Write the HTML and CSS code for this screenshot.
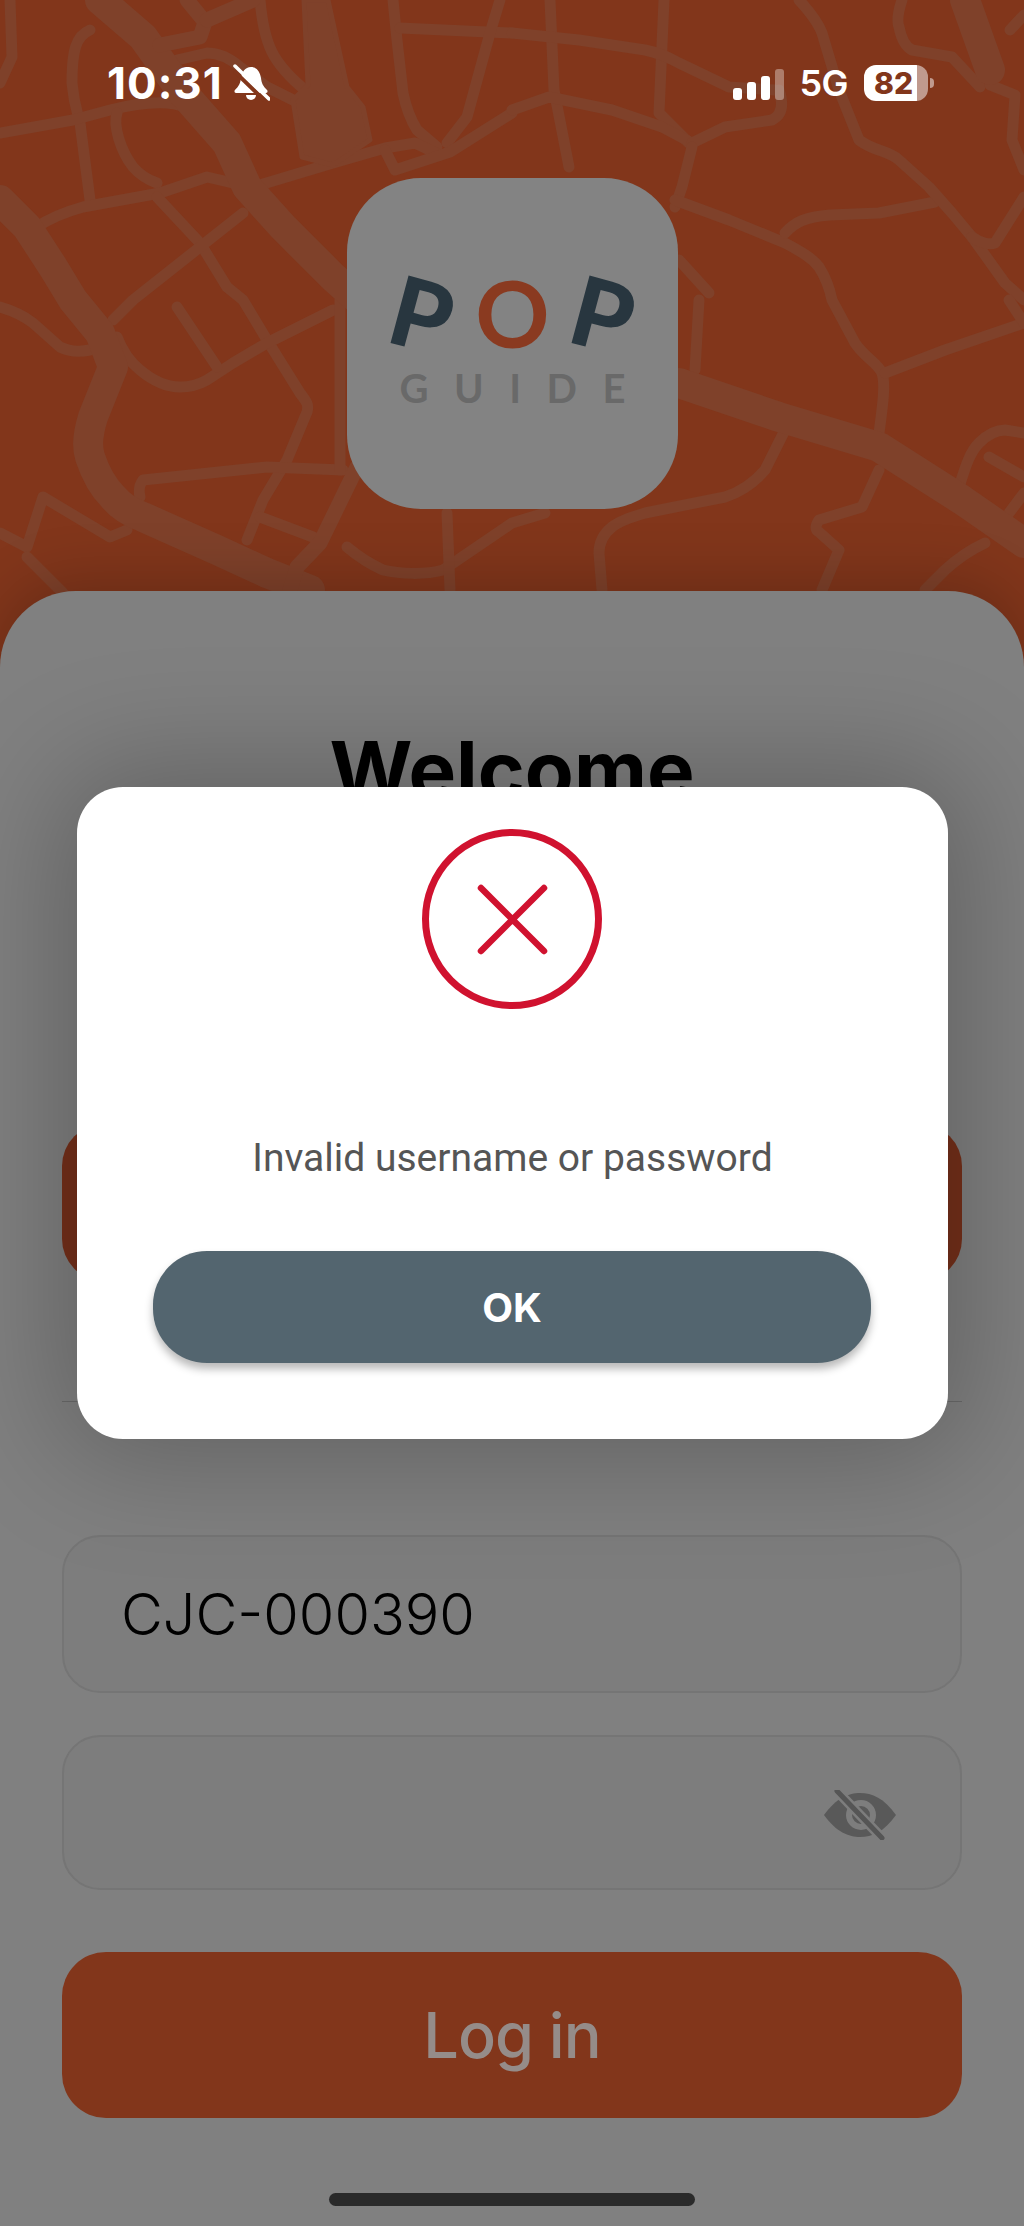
FILE: index.html
```html
<!DOCTYPE html>
<html lang="en">
<head>
<meta charset="utf-8">
<title>Pop Guide login</title>
<link rel="stylesheet" href="styles.css">
</head>
<body>
<div class="screen">
  <svg class="map" viewBox="0 0 1024 600" aria-hidden="true">
    <g class="roads thin">
      <path d="M10 0 12 57 0 83"/>
      <path d="M90 30C76 36 72 50 72 83 74 105 78 115 80 123L90 200"/>
      <path d="M0 133 73 120 110 110C130 105 150 102 167 103 180 104 190 108 200 113"/>
      <path d="M117 113C113 125 120 150 133 167 140 175 148 180 157 183"/>
      <path d="M37 227C50 218 65 212 83 207L160 193 207 177 250 187"/>
      <path d="M157 197 200 243 227 287 243 300 267 340 300 393C307 402 309 405 307 412L287 460 263 500 247 540"/>
      <path d="M113 320 133 300 200 247 243 213"/>
      <path d="M260 0C262 22 265 38 272 52 280 68 293 80 305 90"/>
      <path d="M177 60 207 53C220 53 232 60 240 67L267 87 293 100"/>
      <path d="M393 0 397 40 403 93C407 112 412 122 417 130L437 147"/>
      <path d="M400 28 512 33"/>
      <path d="M500 0 490 33 467 117 447 143"/>
      <path d="M253 187 333 163 385 148 415 143 440 155"/>
      <path d="M385 150 395 170 450 152 512 113"/>
      <path d="M550 0 554 90 569 167"/>
      <path d="M664 0 659 113 689 143"/>
      <path d="M512 33 579 40 645 50C660 53 670 58 679 63L729 87 775 90"/>
      <path d="M512 110 549 97 612 110 662 127 692 143"/>
      <path d="M692 143 725 127 772 120C782 115 784 105 779 90"/>
      <path d="M692 147 682 187 675 207"/>
      <path d="M675 200 729 220 785 243C802 252 812 258 819 267 826 278 830 290 832 300L855 343C865 358 877 362 882 373 886 385 882 410 879 433"/>
      <path d="M785 233C795 222 805 217 830 215L879 213 935 202"/>
      <path d="M799 0C810 12 818 22 822 33L839 90 859 140C875 152 888 150 899 160L929 187 952 213 972 237 1005 283 1024 300"/>
      <path d="M902 0C898 12 897 22 899 27 902 42 908 48 912 50L952 57 980 87"/>
      <path d="M990 85 1015 95 1012 140 1024 170"/>
      <path d="M1010 30 1024 15"/>
      <path d="M972 237C980 243 990 245 995 243L1024 197"/>
      <path d="M0 307C14 311 24 316 33 323L60 347C70 352 80 352 90 350"/>
      <path d="M117 337C122 350 130 362 140 370 152 380 165 387 180 387 192 387 200 384 207 380L233 363 267 343 333 310"/>
      <path d="M177 307 217 367"/>
      <path d="M140 497C138 488 140 484 143 480L267 467 343 470"/>
      <path d="M340 300V470"/>
      <path d="M260 517 313 537"/>
      <path d="M0 533 27 547 43 497 110 537 127 530"/>
      <path d="M27 557 63 593"/>
      <path d="M347 547C360 558 372 565 383 570 400 574 425 575 443 570L512 523 545 513"/>
      <path d="M447 513 450 590"/>
      <path d="M699 300 695 370"/>
      <path d="M679 260 709 293"/>
      <path d="M785 430 765 470C752 485 740 492 725 497L645 513C628 518 618 522 612 527 602 535 599 545 599 553L602 590"/>
      <path d="M885 373 945 350 1024 323"/>
      <path d="M1009 300 1024 323"/>
      <path d="M879 470 862 507 819 520C815 526 815 530 819 532L839 550 822 590"/>
      <path d="M959 487C966 465 970 452 979 443 988 434 996 430 1005 430L1024 433"/>
      <path d="M989 457 1024 477"/>
      <path d="M1024 493 1009 513"/>
      <path d="M985 543C970 550 958 558 945 570L925 590"/>
    </g>
    <g class="roads wide">
      <path d="M100 0 143 37 183 93 227 143 247 187 283 227 333 277 370 310"/>
      <path d="M0 200 27 227 53 267 73 300 100 333 113 367 93 417C86 440 88 450 90 457 96 475 104 488 113 497 122 508 132 513 143 517L217 550 267 573 310 590"/>
      <path d="M965 0 990 70"/>
      <path d="M679 383 779 417 879 447 962 500 1024 543"/>
    </g>
    <g class="roads mid">
      <path d="M160 45 200 37 205 22 187 0"/>
      <path d="M207 20 253 0"/>
      <path d="M357 467 320 543 297 567 290 590"/>
    </g>
    <path class="blob" d="M304 0H328L347 87 363 107 370 140 333 165 302 157 293 100 308 85Z"/>
  </svg>

  <header class="status">
    <div class="status-left">
      <span class="time">10:31</span>
      <svg class="bell" viewBox="0 0 37 38" aria-hidden="true">
        <path class="bell-fill" d="M18 3C12 3 9 8 8 14 7.400 19 6 22 2 26 1 27 1.500 29 3 29H33C34.500 29 35 27 34 26 30 22 28.500 19 28 14 27 8 24 3 18 3Z"/>
        <path class="bell-fill" d="M13 31A5 5 0 0 0 23 31Z"/>
        <path class="bell-gap" d="M1 7 33 38"/>
        <path class="bell-slash" d="M2 2 36 35"/>
      </svg>
    </div>
    <div class="status-right">
      <div class="signal">
        <i class="bar b1"></i><i class="bar b2"></i><i class="bar b3"></i><i class="bar b4"></i>
      </div>
      <span class="net">5G</span>
      <div class="battery"><span>82</span></div>
      <i class="battery-tip"></i>
    </div>
  </header>

  <div class="logo">
    <div class="logo-top">
      <span class="pop-p">P</span><span class="pop-o">O</span><span class="pop-p">P</span>
    </div>
    <div class="logo-bottom">GUIDE</div>
  </div>

  <main class="sheet">
    <h1 class="welcome">Welcome</h1>
    <div class="hidden-action"></div>
    <hr class="divider">
    <div class="field field-user">CJC-000390</div>
    <div class="field field-pass">
      <svg class="eye" viewBox="0 0 72 50" aria-hidden="true">
        <path class="eye-body" d="M0 25C12 8 25 3 36 3 48 3 60 8 72 25 60 42 48 47 36 47 25 47 12 42 0 25Z"/>
        <circle class="eye-ring" cx="37" cy="25" r="12"/>
        <path class="eye-gap" d="M13 1 58 48"/>
        <path class="eye-slash" d="M13 1 58 48"/>
      </svg>
    </div>
    <button class="login" type="button">Log in</button>
  </main>

  <section class="modal">
    <svg class="error-icon" viewBox="0 0 180 180" aria-hidden="true">
      <circle cx="90" cy="90" r="86.500"/>
      <path d="M59 59 122 122M122 59 59 122"/>
    </svg>
    <p class="message">Invalid username or password</p>
    <button class="ok" type="button">OK</button>
  </section>

  <div class="home"></div>
</div>
</body>
</html>
```

FILE: styles.css
```css
* { box-sizing: border-box; }

html, body {
  margin: 0;
  padding: 0;
  background: #808080;
}

.screen {
  position: relative;
  isolation: isolate;
  width: 1024px;
  height: 2226px;
  overflow: hidden;
  background: #82361b;
  display: flex;
  flex-direction: column;
  font-family: Inter, "Liberation Sans", sans-serif;
}

.map {
  position: absolute;
  top: 0;
  left: 0;
  width: 1024px;
  height: 600px;
  z-index: -1;
}

.roads { fill: none; stroke: #7f412a; stroke-linejoin: round; stroke-linecap: round; }
.thin { stroke-width: 11; }
.mid { stroke-width: 15; }
.wide { stroke-width: 30; }
.blob { fill: #7f412a; stroke: #7f412a; stroke-width: 5; stroke-linejoin: round; }

/* status bar */
.status {
  height: 132px;
  padding: 58px 90px 0 107px;
  display: flex;
  justify-content: space-between;
  align-items: flex-start;
  color: #fff;
}

.status-left { display: flex; align-items: center; gap: 10px; }

.time {
  font-size: 44px;
  font-weight: 700;
  line-height: 50px;
  letter-spacing: 1px;
}

.bell { width: 37px; height: 38px; }
.bell-fill { fill: #fff; }
.bell-gap { stroke: #82361b; stroke-width: 4; fill: none; }
.bell-slash { stroke: #fff; stroke-width: 3.500; fill: none; stroke-linecap: round; }

.status-right {
  display: flex;
  align-items: center;
  padding-top: 7px;
  height: 43px;
  position: relative;
}

.signal { display: flex; align-items: flex-end; gap: 5px; height: 31px; margin-top: 3px; }
.bar { display: block; width: 9px; background: #fff; border-radius: 3px; }
.b1 { height: 12px; }
.b2 { height: 18px; }
.b3 { height: 24px; }
.b4 { height: 31px; background: rgba(255, 255, 255, 0.35); }

.net {
  margin-left: 15px;
  font-size: 36px;
  font-weight: 600;
  line-height: 36px;
  letter-spacing: -0.5px;
}

.battery {
  margin-left: 16px;
  width: 64px;
  height: 36px;
  border-radius: 12px;
  background: linear-gradient(to right, #fff 83%, #c09a8e 83%);
  display: flex;
  align-items: center;
  padding-left: 10px;
}

.battery span {
  color: #82361b;
  font-size: 30px;
  font-weight: 800;
  line-height: 36px;
}

.battery-tip {
  display: block;
  width: 4px;
  height: 10px;
  margin-left: 2px;
  background: #c09a8e;
  border-radius: 0 5px 5px 0;
}

/* logo */
.logo {
  margin: 46px 0 0 347px;
  width: 331px;
  height: 331px;
  border-radius: 74px;
  background: #838383;
  display: flex;
  flex-direction: column;
  align-items: center;
  padding-top: 90px;
}

.logo-top {
  display: flex;
  align-items: center;
  justify-content: center;
  gap: 23px;
  height: 90px;
  font-family: Lato, sans-serif;
  line-height: 90px;
}

.pop-p {
  color: #28363f;
  font-size: 96px;
  font-weight: 900;
  transform: rotate(15deg);
}

.pop-o {
  color: #8a3a20;
  font-size: 92px;
  font-weight: 700;
}

.logo-bottom {
  margin-top: 8px;
  color: #696969;
  font-family: Lato, sans-serif;
  font-size: 40px;
  font-weight: 700;
  line-height: 44px;
  letter-spacing: 25.500px;
  margin-right: -25.500px;
}

/* sheet */
.sheet {
  margin-top: 82px;
  flex: 1;
  background: #808080;
  border-radius: 76px 76px 0 0;
  box-shadow: 0 -10px 60px rgba(0, 0, 0, 0.2);
  padding: 134px 62px 0;
  display: flex;
  flex-direction: column;
}

.welcome {
  margin: 0;
  text-align: center;
  color: #000;
  font-family: Inter, sans-serif;
  font-size: 80px;
  font-weight: 700;
  line-height: 90px;
}

.hidden-action {
  margin-top: 309px;
  height: 157px;
  border-radius: 42px;
  background: #76301a;
}

.divider {
  margin: 120px 0 0;
  height: 1px;
  border: 0;
  background: #6a6a6a;
}

.field {
  border: 2px solid #757575;
  background: #7d7d7d;
  border-radius: 38px;
  display: flex;
  align-items: center;
}

.field-user {
  margin-top: 133px;
  height: 158px;
  padding-left: 57px;
  color: #000;
  font-family: Inter, sans-serif;
  font-size: 57.500px;
  font-weight: 300;
}

.field-pass {
  margin-top: 42px;
  height: 155px;
  justify-content: flex-end;
  padding-right: 64px;
}

.eye { width: 72px; height: 50px; margin-top: 4px; }
.eye-body { fill: #595959; }
.eye-ring { fill: #595959; stroke: #7d7d7d; stroke-width: 6; }
.eye-gap { stroke: #7d7d7d; stroke-width: 10; fill: none; }
.eye-slash { stroke: #555; stroke-width: 5; fill: none; stroke-linecap: round; }

.login {
  margin-top: 62px;
  height: 166px;
  border: 0;
  border-radius: 44px;
  background: #82361b;
  color: #958c89;
  font-family: Inter, sans-serif;
  font-size: 63px;
  font-weight: 500;
  letter-spacing: -1px;
}

/* modal */
.modal {
  position: absolute;
  left: 77px;
  top: 787px;
  width: 871px;
  height: 652px;
  border-radius: 46px;
  background: #fff;
  box-shadow: 0 0 120px 20px rgba(0, 0, 0, 0.24);
  display: flex;
  flex-direction: column;
  align-items: center;
  padding-top: 42px;
}

.error-icon { width: 180px; height: 180px; margin-right: 1px; }
.error-icon circle { fill: none; stroke: #d0122f; stroke-width: 7; }
.error-icon path { fill: none; stroke: #d0122f; stroke-width: 6.500; stroke-linecap: round; }

.message {
  margin: 127px 0 0;
  color: #555;
  font-family: Roboto, sans-serif;
  font-size: 39px;
  line-height: 44px;
}

.ok {
  margin: 71px 1px 0 0;
  width: 718px;
  height: 112px;
  border: 0;
  border-radius: 54px;
  background: #53656f;
  color: #fff;
  font-family: Inter, sans-serif;
  font-size: 40px;
  font-weight: 700;
  box-shadow: 0 6px 9px rgba(0, 0, 0, 0.28);
}

.home {
  position: absolute;
  left: 329px;
  bottom: 20px;
  width: 366px;
  height: 13px;
  border-radius: 7px;
  background: #2a2a2a;
}
```
